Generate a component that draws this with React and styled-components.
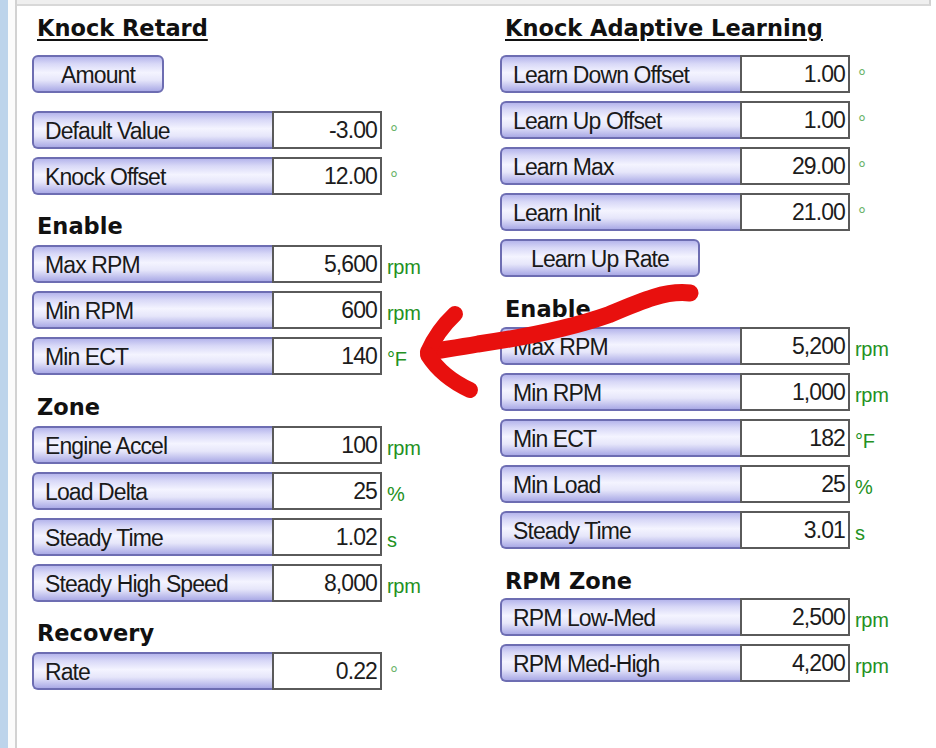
import React from 'react'
import styled, { createGlobalStyle } from 'styled-components'

const GlobalStyle = createGlobalStyle`
  body {
    margin: 0;
    background: #fff;
  }
`

const Page = styled.div`
  position: relative;
  width: 936px;
  height: 748px;
  overflow: hidden;
  display: flex;
  background: #fff;
`

const SideStrip = styled.div`
  width: 8px;
  background: #bdd4eb;
`

const SideGap = styled.div`
  width: 7px;
  background: #fbfbfb;
`

const Panel = styled.div`
  width: 916px;
  box-sizing: border-box;
  border-left: 2px solid #d2d2d2;
  display: flex;
  flex-direction: column;
`

const TopBand = styled.div`
  height: 4px;
  background: #efefef;
  border-bottom: 2px solid #d8d8d8;
  border-right: 2px solid #d2d2d2;
`

const Content = styled.div`
  display: grid;
  grid-template-columns: 468px 1fr;
  padding: 9px 0 0 15px;
`

const Column = styled.div`
  display: flex;
  flex-direction: column;
  align-items: flex-start;
`

const Heading = styled.div`
  margin-top: ${p => p.$top || 0}px;
  padding-left: 5px;
  height: 26px;
  line-height: 26px;
  font-family: 'DejaVu Sans', Verdana, sans-serif;
  font-weight: bold;
  font-size: 22.5px;
  color: #111;
  text-decoration: ${p => (p.$underline ? 'underline' : 'none')};
  text-decoration-thickness: 2px;
  text-underline-offset: 3px;
`

const Stack = styled.div`
  margin-top: ${p => p.$top || 0}px;
  display: flex;
  flex-direction: column;
  gap: 8px;
`

const glass = `
  background: linear-gradient(
    to bottom,
    #b6b6ec 0%,
    #d8d8f7 20%,
    #f4f4ff 46%,
    #e6e6fa 68%,
    #aaaae6 100%
  );
  border: 2px solid #6d6db2;
  font-family: 'Liberation Sans', Arial, sans-serif;
  font-size: 23px;
  letter-spacing: -0.9px;
  color: #1a1a1a;
`

const Button = styled.div`
  ${glass}
  margin-top: ${p => p.$top || 0}px;
  width: ${p => p.$width}px;
  height: 38px;
  box-sizing: border-box;
  border-radius: 6px;
  display: flex;
  align-items: center;
  justify-content: center;
  padding-top: 3px;
`

const Row = styled.div`
  display: flex;
  height: 38px;
`

const Label = styled.div`
  ${glass}
  width: 240px;
  box-sizing: border-box;
  border-right: none;
  border-radius: 6px 0 0 6px;
  display: flex;
  align-items: center;
  padding: 3px 0 0 11px;
`

const Value = styled.div`
  width: 110px;
  box-sizing: border-box;
  border: 2px solid #5a5a5a;
  background: #fff;
  display: flex;
  align-items: center;
  justify-content: flex-end;
  padding: 1px 3px 0 0;
  font-family: 'Liberation Sans', Arial, sans-serif;
  font-size: 23px;
  letter-spacing: -0.9px;
  color: #1c1c1c;
`

const Unit = styled.div`
  margin-left: ${p => (p.$soft ? 8 : 5)}px;
  padding-top: 3px;
  line-height: 38px;
  font-family: 'Liberation Sans', Arial, sans-serif;
  font-size: 20px;
  letter-spacing: -0.3px;
  color: ${p => (p.$soft ? '#6db46d' : '#239123')};
`

const ArrowLayer = styled.svg`
  position: absolute;
  left: 0;
  top: 0;
  pointer-events: none;
`

const Field = ({ label, value, unit }) => (
  <Row>
    <Label>{label}</Label>
    <Value>{value}</Value>
    <Unit $soft={unit === '°'}>{unit}</Unit>
  </Row>
)

const Fields = ({ items, top }) => (
  <Stack $top={top}>
    {items.map(([label, value, unit]) => (
      <Field key={label} label={label} value={value} unit={unit} />
    ))}
  </Stack>
)

const retard = [
  ['Default Value', '-3.00', '°'],
  ['Knock Offset', '12.00', '°'],
]

const retardEnable = [
  ['Max RPM', '5,600', 'rpm'],
  ['Min RPM', '600', 'rpm'],
  ['Min ECT', '140', '°F'],
]

const zone = [
  ['Engine Accel', '100', 'rpm'],
  ['Load Delta', '25', '%'],
  ['Steady Time', '1.02', 's'],
  ['Steady High Speed', '8,000', 'rpm'],
]

const recovery = [['Rate', '0.22', '°']]

const learning = [
  ['Learn Down Offset', '1.00', '°'],
  ['Learn Up Offset', '1.00', '°'],
  ['Learn Max', '29.00', '°'],
  ['Learn Init', '21.00', '°'],
]

const learnEnable = [
  ['Max RPM', '5,200', 'rpm'],
  ['Min RPM', '1,000', 'rpm'],
  ['Min ECT', '182', '°F'],
  ['Min Load', '25', '%'],
  ['Steady Time', '3.01', 's'],
]

const rpmZone = [
  ['RPM Low-Med', '2,500', 'rpm'],
  ['RPM Med-High', '4,200', 'rpm'],
]

// the hand-drawn red arrow sitting over the form
const Arrow = () => (
  <ArrowLayer width="936" height="748" viewBox="0 0 936 748">
    <g fill="none" stroke="#e8100e" strokeLinecap="round" strokeLinejoin="round">
      <path
        d="M 690 293 C 666 290 641 301 608 315 C 568 329 520 338 478 344 C 455 348 440 350 429 352"
        strokeWidth="17"
      />
      <path d="M 455 314 Q 437 331 428 352" strokeWidth="16" />
      <path d="M 428 355 Q 442 377 470 390" strokeWidth="16" />
    </g>
  </ArrowLayer>
)

export default function App() {
  return (
    <Page>
      <GlobalStyle />
      <SideStrip />
      <SideGap />
      <Panel>
        <TopBand />
        <Content>
          <Column>
            <Heading $underline>Knock Retard</Heading>
            <Button $top={14} $width={132}>Amount</Button>
            <Fields items={retard} top={18} />
            <Heading $top={18}>Enable</Heading>
            <Fields items={retardEnable} top={6} />
            <Heading $top={19}>Zone</Heading>
            <Fields items={zone} top={6} />
            <Heading $top={18}>Recovery</Heading>
            <Fields items={recovery} top={6} />
          </Column>
          <Column>
            <Heading $underline>Knock Adaptive Learning</Heading>
            <Fields items={learning} top={14} />
            <Button $top={8} $width={200}>Learn Up Rate</Button>
            <Heading $top={19}>Enable</Heading>
            <Fields items={learnEnable} top={5} />
            <Heading $top={19}>RPM Zone</Heading>
            <Fields items={rpmZone} top={4} />
          </Column>
        </Content>
      </Panel>
      <Arrow />
    </Page>
  )
}
